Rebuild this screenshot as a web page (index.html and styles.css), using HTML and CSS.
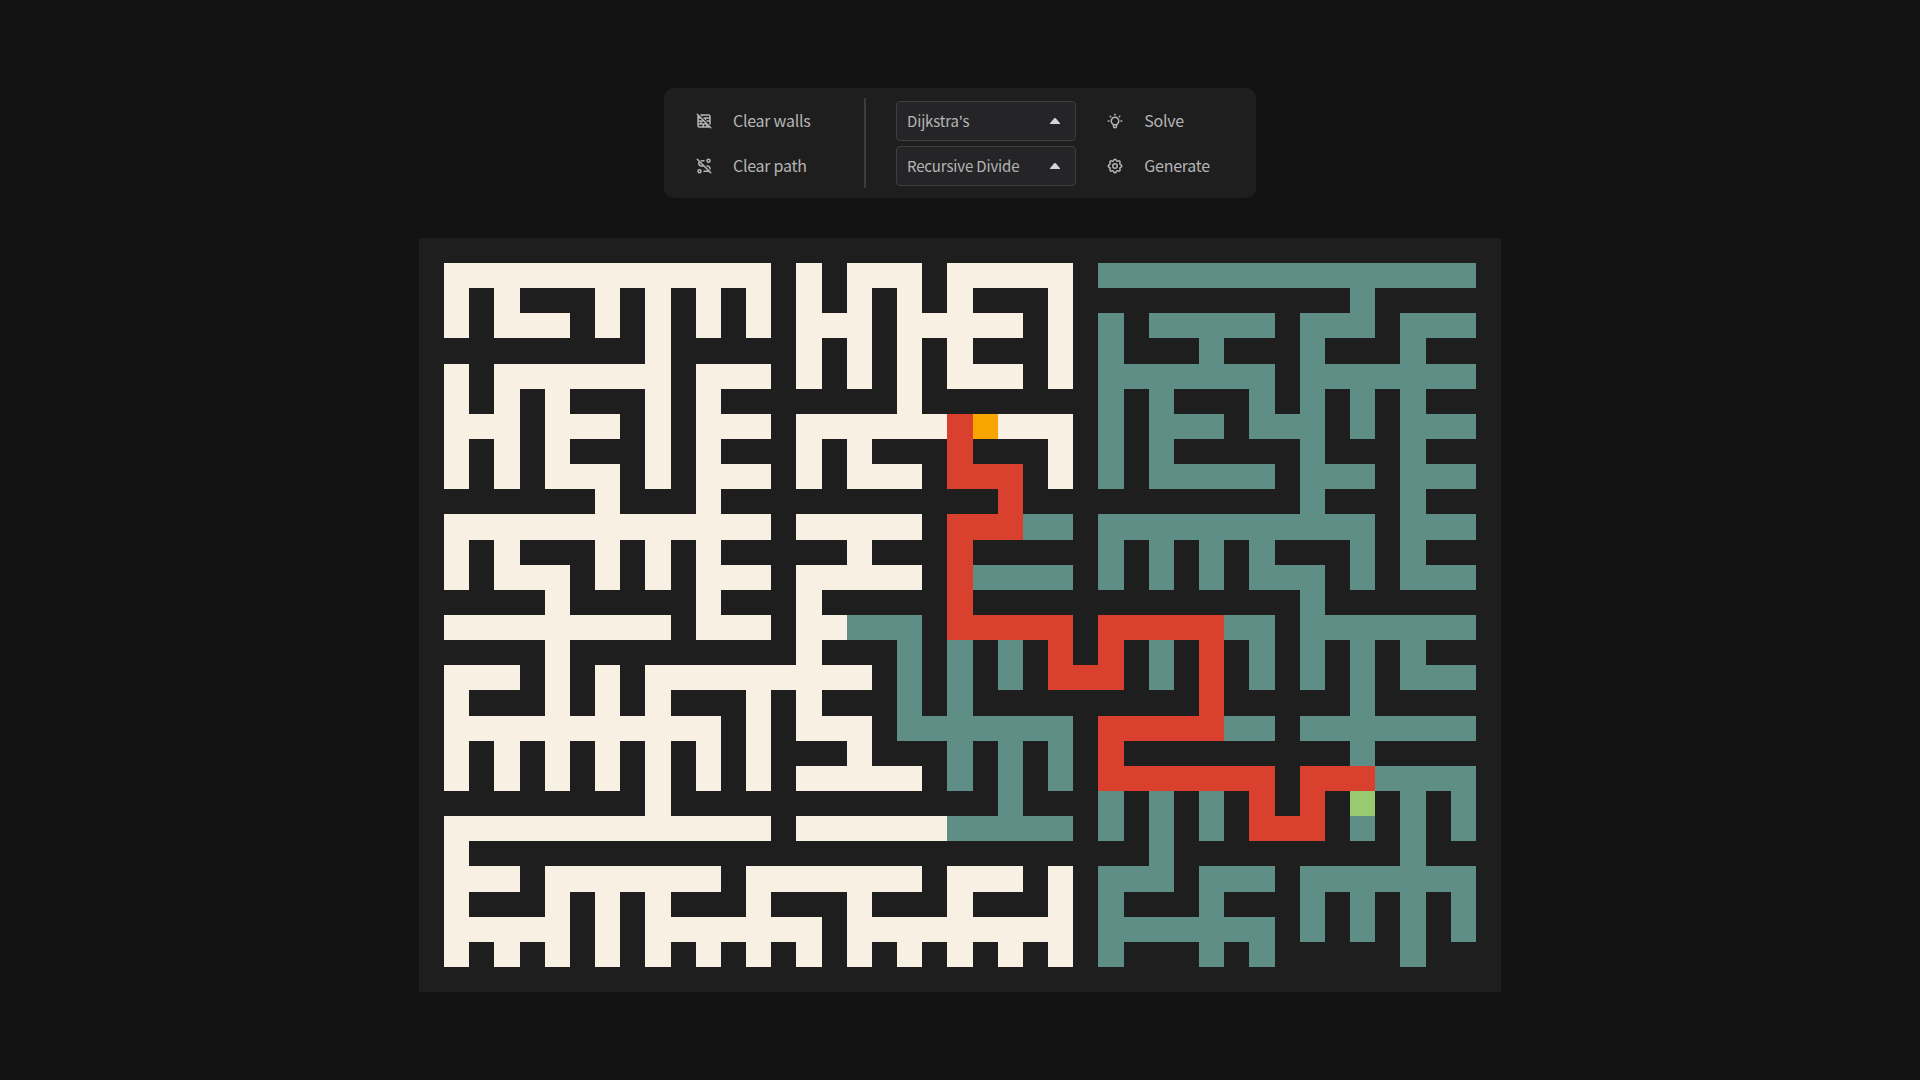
FILE: index.html
```html
<!DOCTYPE html>
<html lang="en">
<head>
<meta charset="utf-8">
<title>Pathfinding Visualizer</title>
<link rel="stylesheet" href="styles.css">
</head>
<body>
<header class="toolbar">
  <div class="group group-clear">
    <button class="action"><svg class="icon" viewBox="0 0 24 24"><path d="M8 4h10a2 2 0 0 1 2 2v10m-.589 3.417c-.361.36-.86.583-1.411.583H6a2 2 0 0 1-2-2V6c0-.55.222-1.047.58-1.409M4 8h4m4 0h8m0 4h-4m-4 0H4m0 4h12M9 4v1m5 3v2m-6 2v4m3 0v4m5-4v4M3 3l18 18"/></svg><span>Clear walls</span></button>
    <button class="action"><svg class="icon" viewBox="0 0 24 24"><circle cx="6" cy="19" r="2"/><circle cx="18" cy="5" r="2"/><path d="M12 19h4.500c.71 0 1.372-.212 1.924-.576m1.545-2.459a3.500 3.500 0 0 0-3.469-3.965h-.499m-4 0h-3.501a3.500 3.500 0 0 1-2.477-5.972m2.477-1.028h3.500M3 3l18 18"/></svg><span>Clear path</span></button>
  </div>
  <div class="divider"></div>
  <div class="selects">
    <button class="select"><span>Dijkstra's</span><svg class="caret" viewBox="0 0 10 6"><path d="M0 6V5.200L4.200.3Q5-.3 5.800.3L10 5.200V6Z"/></svg></button>
    <button class="select"><span>Recursive Divide</span><svg class="caret" viewBox="0 0 10 6"><path d="M0 6V5.200L4.200.3Q5-.3 5.800.3L10 5.200V6Z"/></svg></button>
  </div>
  <div class="group group-run">
    <button class="action"><svg class="icon" viewBox="0 0 24 24"><path d="M3 12h1m8-9v1m8 8h1M5.6 5.6l.7.7m12.1-.7-.7.7M9 16a5 5 0 1 1 6 0a3.500 3.500 0 0 0-1 3a2 2 0 0 1-4 0a3.500 3.500 0 0 0-1-3m.7 1h4.600"/></svg><span>Solve</span></button>
    <button class="action"><svg class="icon" viewBox="0 0 24 24"><path d="M10.325 4.317c.426-1.756 2.924-1.756 3.350 0a1.724 1.724 0 0 0 2.573 1.066c1.543-.94 3.310.826 2.370 2.370a1.724 1.724 0 0 0 1.065 2.572c1.756.426 1.756 2.924 0 3.350a1.724 1.724 0 0 0-1.066 2.573c.94 1.543-.826 3.310-2.370 2.370a1.724 1.724 0 0 0-2.572 1.065c-.426 1.756-2.924 1.756-3.350 0a1.724 1.724 0 0 0-2.573-1.066c-1.543.94-3.310-.826-2.370-2.370a1.724 1.724 0 0 0-1.065-2.572c-1.756-.426-1.756-2.924 0-3.350a1.724 1.724 0 0 0 1.066-2.573c-.94-1.543.826-3.310 2.370-2.370c1 .608 2.296.07 2.572-1.065"/><circle cx="12" cy="12" r="3"/></svg><span>Generate</span></button>
  </div>
</header>
<main class="board" id="board"></main>
<script src="maze.js"></script>
</body>
</html>
```

FILE: styles.css
```css
* {
  box-sizing: border-box;
}

body {
  margin: 0;
  height: 1080px;
  overflow: hidden;
  padding-top: 88px;
  display: flex;
  flex-direction: column;
  align-items: center;
  background: #121212;
  color: #b5b5b5;
  font-family: "Noto Sans CJK SC", "Noto Sans", sans-serif;
  font-size: 16px;
}

button {
  margin: 0;
  border: 0;
  background: none;
  color: inherit;
  font: inherit;
}

.toolbar {
  width: 592px;
  height: 110px;
  flex: none;
  padding: 10px 0 10px 31px;
  display: flex;
  border-radius: 10px;
  background: #1e1e1e;
}

.group {
  display: flex;
  flex-direction: column;
  gap: 5px;
  padding-top: 3px;
}

.group-clear {
  width: 169px;
}

.group-run {
  margin-left: 30.300px;
}

.action {
  height: 40px;
  padding: 0 0 1px;
  display: flex;
  align-items: center;
  gap: 20px;
  letter-spacing: -0.27px;
  line-height: 24px;
}

.action span {
  padding-bottom: 1px;
}

.icon {
  width: 18px;
  height: 18px;
  fill: none;
  stroke: currentColor;
  stroke-width: 2;
  stroke-linecap: round;
  stroke-linejoin: round;
}

.divider {
  width: 2px;
  height: 90px;
  margin-right: 30px;
  background: #3c3c3e;
}

.selects {
  width: 180px;
  padding-top: 3px;
  display: flex;
  flex-direction: column;
  gap: 5px;
}

.select {
  height: 40px;
  padding: 0 15px 0 10px;
  display: flex;
  align-items: center;
  justify-content: space-between;
  border: 1px solid #3f3f42;
  border-radius: 4px;
  background: #252527;
  font-size: 15px;
  letter-spacing: -0.15px;
  line-height: 24px;
}

.select span {
  padding-bottom: 1px;
}

.caret {
  width: 10px;
  height: 6px;
  fill: #d4d4d8;
}

/* 43 x 30 cells of about 25.16px, on whole pixels */
.board {
  margin-top: 40px;
  flex: none;
  display: grid;
  grid-template-columns: repeat(7, 25px 25px 25px 26px 25px 25px) 25px;
  grid-template-rows: repeat(4, 25px 25px 25px 25px 26px 25px 25px) 25px 25px;
  background: #1e1e1e;
}

.open { background: #f8f0e3; }
.visited { background: #5f8e87; }
.path { background: #d9402e; }
.start { background: #98ca70; }
.goal { background: #f8a500; }
```

FILE: maze.js
```js
// Each row lists its runs of cells: a kind letter, then the first and last column.
const kinds = { w: "open", t: "visited", r: "path", g: "start", o: "goal" };
const rows = [
  "",
  "w1-13 w15 w17-19 w21-25 t27-41",
  "w1 w3 w7 w9 w11 w13 w15 w17 w19 w21 w25 t37",
  "w1 w3-5 w7 w9 w11 w13 w15-17 w19-23 w25 t27 t29-33 t35-37 t39-41",
  "w9 w15 w17 w19 w21 w25 t27 t31 t35 t39",
  "w1 w3-9 w11-13 w15 w17 w19 w21-23 w25 t27-33 t35-41",
  "w1 w3 w5 w9 w11 w19 t27 t29 t33 t35 t37 t39",
  "w1-3 w5-7 w9 w11-13 w15-20 r21 o22 w23-25 t27 t29-31 t33-35 t37 t39-41",
  "w1 w3 w5 w9 w11 w15 w17 r21 w25 t27 t29 t35 t39",
  "w1 w3 w5-7 w9 w11-13 w15 w17-19 r21-23 w25 t27 t29-33 t35-37 t39-41",
  "w7 w11 r23 t35 t39",
  "w1-13 w15-19 r21-23 t24-25 t27-37 t39-41",
  "w1 w3 w7 w9 w11 w17 r21 t27 t29 t31 t33 t37 t39",
  "w1 w3-5 w7 w9 w11-13 w15-19 r21 t22-25 t27 t29 t31 t33-35 t37 t39-41",
  "w5 w11 w15 r21 t35",
  "w1-9 w11-13 w15-16 t17-19 r21-25 r27-31 t32-33 t35-41",
  "w5 w15 t19 t21 t23 r25 r27 t29 r31 t33 t35 t37 t39",
  "w1-3 w5 w7 w9-17 t19 t21 t23 r25-27 t29 r31 t33 t35 t37 t39-41",
  "w1 w5 w7 w9 w13 w15 t19 t21 r31 t37",
  "w1-11 w13 w15-17 t19-25 r27-31 t32-33 t35-41",
  "w1 w3 w5 w7 w9 w11 w13 w17 t21 t23 t25 r27 t37",
  "w1 w3 w5 w7 w9 w11 w13 w15-19 t21 t23 t25 r27-33 r35-37 t38-41",
  "w9 t23 t27 t29 t31 r33 r35 g37 t39 t41",
  "w1-13 w15-20 t21-25 t27 t29 t31 r33-35 t37 t39 t41",
  "w1 t29 t39",
  "w1-3 w5-11 w13-19 w21-23 w25 t27-29 t31-33 t35-41",
  "w1 w5 w7 w9 w13 w17 w21 w25 t27 t31 t35 t37 t39 t41",
  "w1-5 w7 w9-15 w17-25 t27-33 t35 t37 t39 t41",
  "w1 w3 w5 w7 w9 w11 w13 w15 w17 w19 w21 w23 w25 t27 t31 t33 t39",
  ""
];

const board = document.getElementById("board");
rows.forEach((row, y) => {
  row.split(" ").filter(Boolean).forEach((run) => {
    const [first, last = first] = run.slice(1).split("-").map(Number);
    const cell = document.createElement("div");
    cell.className = kinds[run[0]];
    cell.style.gridArea = `${y + 1} / ${first + 1} / ${y + 2} / ${last + 2}`;
    board.append(cell);
  });
});
```
